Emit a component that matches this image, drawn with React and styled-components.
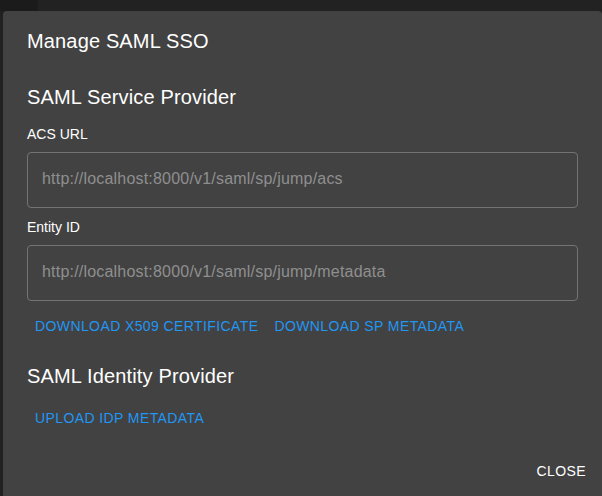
import styled, { createGlobalStyle } from 'styled-components'

const GlobalStyle = createGlobalStyle`
  html, body {
    margin: 0;
    padding: 0;
    background: #212121;
  }
  body {
    font-family: "Liberation Sans", Arial, sans-serif;
    -webkit-font-smoothing: antialiased;
  }
`

const Page = styled.div`
  width: 602px;
  height: 496px;
  overflow: hidden;
  display: flex;
  flex-direction: column;
`

const TopStrip = styled.div`
  display: flex;
  height: 11px;
  flex-shrink: 0;
`

const Shade = styled.div`
  width: ${p => p.w || 'auto'};
  flex: ${p => (p.w ? '0 0 auto' : '1')};
  background: ${p => p.bg};
`

const Dialog = styled.div`
  margin-left: 3px;
  flex: 1;
  background: #424242;
  border-radius: 4px 4px 0 0;
  color: #fff;
  display: flex;
  flex-direction: column;
`

const Title = styled.h2`
  margin: 0;
  padding: 14px 24px 0;
  font-size: 20px;
  line-height: 32px;
  font-weight: 400;
  letter-spacing: 0.15px;
`

const Content = styled.div`
  padding: 0 24px;
  display: flex;
  flex-direction: column;
`

const Heading = styled.h3`
  margin: ${p => p.top}px 0 0;
  font-size: 20px;
  line-height: 32px;
  font-weight: 400;
  letter-spacing: 0.15px;
`

const Label = styled.label`
  margin-top: ${p => p.top}px;
  font-size: 14px;
  line-height: 20px;
`

const Field = styled.input`
  margin-top: 8px;
  box-sizing: border-box;
  width: 100%;
  height: 56px;
  padding: 0 14px 3px;
  border: 1px solid #737373;
  border-radius: 4px;
  background: transparent;
  color: #8f8f8f;
  font-family: inherit;
  font-size: 16px;
  letter-spacing: 0.2px;
  outline: none;
`

const ButtonRow = styled.div`
  display: flex;
  margin-top: ${p => p.top}px;
`

const TextButton = styled.button`
  border: 0;
  background: transparent;
  padding: 6px 8px;
  font-family: inherit;
  font-size: 14px;
  line-height: 24px;
  font-weight: 400;
  letter-spacing: 0.4px;
  text-transform: uppercase;
  color: ${p => p.color || '#2196f3'};
  cursor: pointer;
`

const Actions = styled.div`
  display: flex;
  justify-content: flex-end;
  padding: 17px 8px 8px;
`

export default function App() {
  return (
    <>
      <GlobalStyle />
      <Page>
        <TopStrip>
          <Shade w="38px" bg="#1b1b1b" />
          <Shade bg="#222222" />
        </TopStrip>
        <Dialog>
          <Title>Manage SAML SSO</Title>
          <Content>
            <Heading top={24}>SAML Service Provider</Heading>
            <Label top={11}>ACS URL</Label>
            <Field readOnly value="http://localhost:8000/v1/saml/sp/jump/acs" />
            <Label top={9}>Entity ID</Label>
            <Field readOnly value="http://localhost:8000/v1/saml/sp/jump/metadata" />
            <ButtonRow top={7}>
              <TextButton>Download X509 Certificate</TextButton>
              <TextButton>Download SP Metadata</TextButton>
            </ButtonRow>
            <Heading top={16}>SAML Identity Provider</Heading>
            <ButtonRow top={8}>
              <TextButton>Upload IdP Metadata</TextButton>
            </ButtonRow>
          </Content>
          <Actions>
            <TextButton color="#ffffff">Close</TextButton>
          </Actions>
        </Dialog>
      </Page>
    </>
  )
}
